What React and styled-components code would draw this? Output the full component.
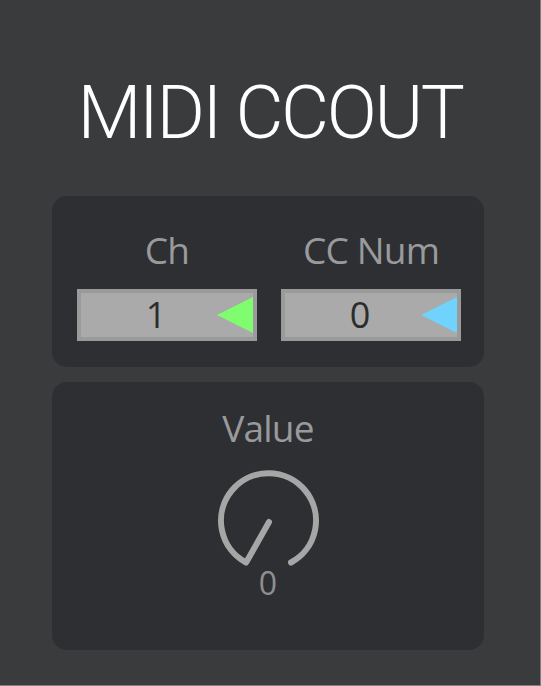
import styled, { createGlobalStyle } from 'styled-components';

const GlobalStyle = createGlobalStyle`
  html, body {
    margin: 0;
    padding: 0;
    background: #7f7f7f;
  }
`;

const Device = styled.div`
  width: 540px;
  height: 685px;
  background: #3a3b3d;
  display: flex;
  flex-direction: column;
  padding-left: 52px;
  box-sizing: border-box;
  font-family: 'Open Sans', 'Noto Sans', sans-serif;
`;

const Title = styled.h1`
  margin: 73px 0 43px -52px;
  width: 540px;
  text-align: center;
  font-family: Roboto, 'Liberation Sans', sans-serif;
  font-weight: 300;
  font-size: 74px;
  line-height: 80px;
  height: 80px;
  color: #ffffff;
  letter-spacing: -2.4px;
`;

const Panel = styled.section`
  width: 432px;
  height: ${(p) => p.$h}px;
  box-sizing: border-box;
  background: #2e2f32;
  border-radius: 15px;
  padding-top: ${(p) => p.$pt}px;
  margin-bottom: 15px;
  display: flex;
  flex-direction: ${(p) => (p.$row ? 'row' : 'column')};
  align-items: ${(p) => (p.$row ? 'flex-start' : 'center')};
  padding-left: ${(p) => (p.$row ? 25 : 0)}px;
  gap: ${(p) => (p.$row ? 24 : 0)}px;
`;

const Field = styled.div`
  width: 180px;
  display: flex;
  flex-direction: column;
  align-items: center;
`;

const Label = styled.div`
  font-size: 37px;
  font-weight: 500;
  line-height: 44px;
  height: 44px;
  color: #999a9c;
  letter-spacing: -0.8px;
`;

const NumBox = styled.div`
  position: relative;
  margin-top: 17px;
  width: 180px;
  height: 52px;
  box-sizing: border-box;
  border: 4px solid #9a9a9a;
  background: #aaaaaa;
  padding-right: 22px;
  display: flex;
  align-items: center;
  justify-content: center;
  font-size: 36px;
  font-weight: 500;
  color: #2c2c2c;
  line-height: 44px;
`;

const Arrow = styled.span`
  position: absolute;
  right: 0;
  top: 4px;
  width: 36px;
  height: 36px;
  background: ${(p) => p.$color};
  clip-path: polygon(100% 0, 0 50%, 100% 100%);
`;

const KnobWrap = styled.div`
  margin-top: 16px;
  display: flex;
  flex-direction: column;
  align-items: center;
`;

const KnobValue = styled.div`
  margin-top: -11px;
  font-size: 32px;
  font-weight: 500;
  line-height: 36px;
  color: #8e8f91;
`;

const Knob = () => (
  <svg width="110" height="110" viewBox="0 0 110 110" style={{ display: 'block' }}>
    <path
      d="M33 96.5 A47.5 47.5 0 1 1 78 96.5"
      fill="none"
      stroke="#a6a6a6"
      strokeWidth="6"
      strokeLinecap="round"
    />
    <line x1="56" y1="56" x2="34" y2="95" stroke="#a6a6a6" strokeWidth="6" strokeLinecap="round" />
  </svg>
);

export default function App() {
  return (
    <>
      <GlobalStyle />
      <Device>
        <Title>MIDI CCOUT</Title>
        <Panel $h={171} $pt={32} $row>
          <Field>
            <Label>Ch</Label>
            <NumBox>
              1
              <Arrow $color="#80fd6f" />
            </NumBox>
          </Field>
          <Field>
            <Label>CC Num</Label>
            <NumBox>
              0
              <Arrow $color="#6fd3fd" />
            </NumBox>
          </Field>
        </Panel>
        <Panel $h={268} $pt={24}>
          <Label>Value</Label>
          <KnobWrap>
            <Knob />
            <KnobValue>0</KnobValue>
          </KnobWrap>
        </Panel>
      </Device>
    </>
  );
}
